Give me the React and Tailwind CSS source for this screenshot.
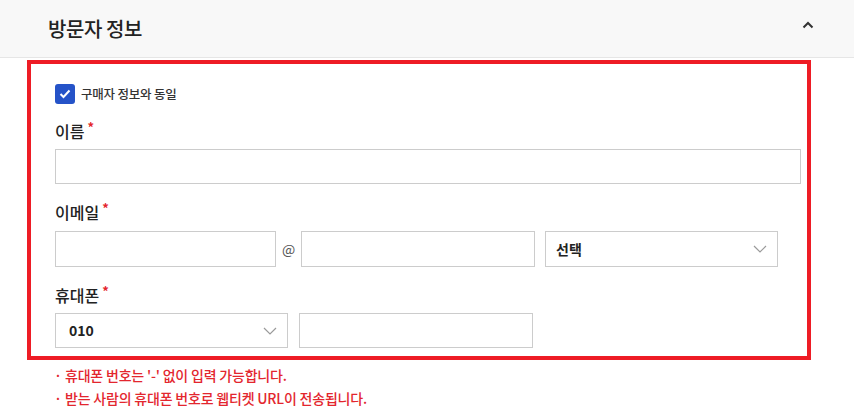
import React, { useState } from "react";

const font = { fontFamily: '"Noto Sans CJK KR", "Noto Sans", sans-serif' };

const ChevronDown = () => (
  <svg width="14" height="8" viewBox="0 0 14 8" fill="none">
    <path d="M1 1l6 6 6-6" stroke="#9a9a9a" strokeWidth="1.2" />
  </svg>
);

const Label = ({ children }) => (
  <div className="flex items-start h-[22px] text-[16px] leading-[22px] font-medium text-[#222]">
    {children}
    <span className="ml-[3px] text-[13px] leading-[14px] text-[#e4262c] font-bold">*</span>
  </div>
);

const VisitorInfo = () => {
  const [sameAsBuyer, setSameAsBuyer] = useState(true);

  return (
    <div className="w-[854px] h-[418px] bg-white overflow-hidden" style={font}>
      {/* Section header */}
      <div className="h-[58px] bg-[#f8f8f8] border-b border-[#e6e6e6] flex items-center justify-between pl-[48px] pr-[40px]">
        <h2 className="text-[20px] font-medium text-[#222] tracking-[-0.4px]">방문자 정보</h2>
        <svg width="12" height="8" viewBox="0 0 12 8" fill="none" className="mt-[-7px]">
          <path d="M1.5 6.5L6 2l4.5 4.5" stroke="#333" strokeWidth="2" />
        </svg>
      </div>

      {/* Highlighted form */}
      <div className="ml-[27px] mt-[2px] w-[784px] border-4 border-[#ee1c25] pt-[20px] pb-[8px] pl-[24px] pr-[5px]">
        <label className="flex items-center h-[20px] cursor-pointer" onClick={() => setSameAsBuyer(!sameAsBuyer)}>
          <span className={`w-[20px] h-[20px] rounded-[3px] flex items-center justify-center ${sameAsBuyer ? "bg-[#2553c8]" : "bg-white border border-[#ccc]"}`}>
            {sameAsBuyer && (
              <svg width="12" height="10" viewBox="0 0 12 10" fill="none">
                <path d="M1.5 5l3 3L10.5 1.5" stroke="white" strokeWidth="2" />
              </svg>
            )}
          </span>
          <span className="ml-[6px] text-[12.5px] text-[#333] font-medium tracking-[-0.2px]">구매자 정보와 동일</span>
        </label>

        <div className="mt-[16px]">
          <Label>이름</Label>
          <input className="mt-[7px] w-[746px] h-[35px] border border-[#cccccc] outline-none px-3" />
        </div>

        <div className="mt-[17px]">
          <Label>이메일</Label>
          <div className="mt-[8px] flex items-center h-[36px]">
            <input className="w-[221px] h-full border border-[#cccccc] outline-none px-3" />
            <span className="w-[25px] text-center text-[14px] text-[#555]">@</span>
            <input className="w-[234px] h-full border border-[#cccccc] outline-none px-3" />
            <div className="ml-[10px] w-[233px] h-full border border-[#cccccc] flex items-center justify-between pl-[10px] pr-[10px]">
              <span className="text-[14px] font-bold text-[#222]">선택</span>
              <ChevronDown />
            </div>
          </div>
        </div>

        <div className="mt-[17px]">
          <Label>휴대폰</Label>
          <div className="mt-[7px] flex items-center h-[35px]">
            <div className="w-[233px] h-full border border-[#cccccc] flex items-center justify-between pl-[13px] pr-[10px]">
              <span className="text-[14px] font-bold text-[#222]">010</span>
              <ChevronDown />
            </div>
            <input className="ml-[11px] w-[234px] h-full border border-[#cccccc] outline-none px-3" />
          </div>
        </div>
      </div>

      {/* Notes */}
      <ul className="mt-[4px] ml-[54px] text-[14px] leading-[23px] font-medium text-[#e3262e] tracking-[-0.2px]">
        <li className="flex">
          <span className="w-[11px]">·</span>
          <span>휴대폰 번호는 '-' 없이 입력 가능합니다.</span>
        </li>
        <li className="flex">
          <span className="w-[11px]">·</span>
          <span>받는 사람의 휴대폰 번호로 웹티켓 URL이 전송됩니다.</span>
        </li>
      </ul>
    </div>
  );
};

export default VisitorInfo;
